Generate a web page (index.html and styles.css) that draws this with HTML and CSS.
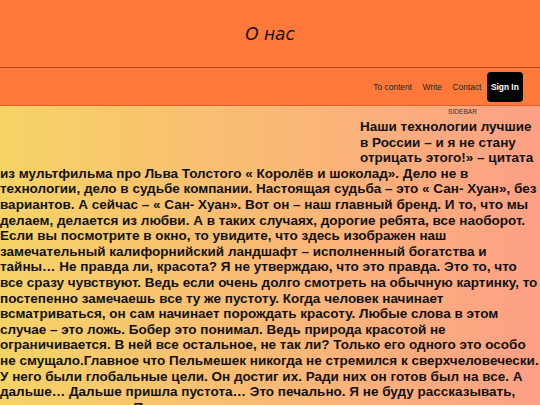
FILE: index.html
```html
<!DOCTYPE html>
<html lang="ru">
<head>
<meta charset="utf-8">
<title>О нас</title>
<link rel="stylesheet" href="styles.css">
</head>
<body>
<header class="masthead">
  <h1 class="title">О нас</h1>
</header>
<nav class="topnav">
  <a class="navlink" href="#content">To content</a>
  <a class="navlink" href="#">Write</a>
  <a class="navlink" href="#">Contact</a>
  <a class="signin" href="#">Sign In</a>
</nav>
<div class="page">
  <aside class="sidebar">SIDEBAR</aside>
  <main class="content" id="content">
    <div class="figure"></div>
    <p class="text">Наши технологии лучшие в России – и я не стану отрицать этого!» – цитата из мультфильма про Льва Толстого « Королёв и шоколад». Дело не в технологии, дело в судьбе компании. Настоящая судьба – это « Сан- Хуан», без вариантов. А сейчас – « Сан- Хуан». Вот он – наш главный бренд. И то, что мы делаем, делается из любви. А в таких случаях, дорогие ребята, все наоборот. Если вы посмотрите в окно, то увидите, что здесь изображен наш замечательный калифорнийский ландшафт – исполненный богатства и тайны… Не правда ли, красота? Я не утверждаю, что это правда. Это то, что все сразу чувствуют. Ведь если очень долго смотреть на обычную картинку, то постепенно замечаешь все ту же пустоту. Когда человек начинает всматриваться, он сам начинает порождать красоту. Любые слова в этом случае – это ложь. Бобер это понимал. Ведь природа красотой не ограничивается. В ней все остальное, не так ли? Только его одного это особо не смущало.Главное что Пельмешек никогда не стремился к сверхчеловечески. У него были глобальные цели. Он достиг их. Ради них он готов был на все. А дальше… Дальше пришла пустота… Это печально. Я не буду рассказывать, что там случилось. Потому что это очень грустная история, и она не для всех. Вы сами все поймете, когда придет время.</p>
  </main>
</div>
</body>
</html>
```

FILE: styles.css
```css
html, body {
  margin: 0;
  padding: 0;
}

body {
  background: linear-gradient(to right, #f6d365, #fda085);
  color: #111;
  font-family: "Liberation Sans", Arial, sans-serif;
}

.masthead {
  height: 67px;
  display: flex;
  align-items: center;
  justify-content: center;
  background: #ff7a3a;
  border-bottom: 1px solid #a9491d;
}

.title {
  margin: 0;
  font-family: "DejaVu Sans", sans-serif;
  font-style: italic;
  font-weight: normal;
  font-size: 17px;
  color: #111;
}

.topnav {
  height: 37px;
  display: flex;
  align-items: center;
  justify-content: flex-end;
  padding-right: 17px;
  background: #ff7a3a;
  border-bottom: 1px solid #d8612b;
}

.navlink {
  font-size: 8.4px;
  color: #222;
  text-decoration: none;
  padding: 0 5.3px;
}

.signin {
  font-size: 8.4px;
  font-weight: bold;
  line-height: 10px;
  color: #fff;
  background: #000;
  text-decoration: none;
  padding: 10px 4.2px;
  border-radius: 4px;
}

.sidebar {
  height: 8px;
  padding-top: 2px;
  margin-bottom: 3px;
  padding-right: 63px;
  text-align: right;
  font-size: 6.6px;
  line-height: 8px;
  color: #333;
}

.figure {
  float: left;
  width: 360px;
  height: 46px;
}

.text {
  margin: 0;
  font-size: 13.5px;
  font-weight: bold;
  line-height: 15.6px;
}
```
